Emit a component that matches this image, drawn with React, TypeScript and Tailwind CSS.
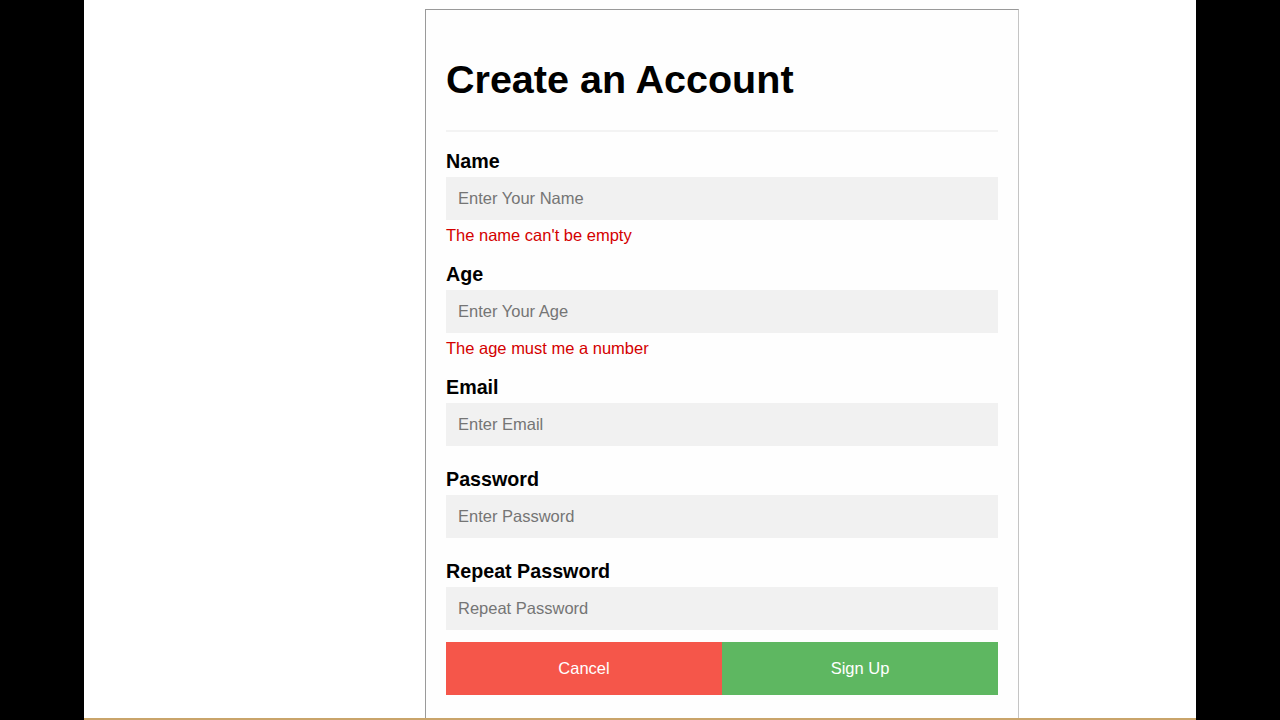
import React from "react";

type Field = {
  label: string;
  placeholder: string;
  type: string;
  error?: string;
};

const fields: Field[] = [
  { label: "Name", placeholder: "Enter Your Name", type: "text", error: "The name can't be empty" },
  { label: "Age", placeholder: "Enter Your Age", type: "text", error: "The age must me a number" },
  { label: "Email", placeholder: "Enter Email", type: "text" },
  { label: "Password", placeholder: "Enter Password", type: "password" },
  { label: "Repeat Password", placeholder: "Repeat Password", type: "password" },
];

function FormField({ label, placeholder, type, error, last }: Field & { last?: boolean }) {
  return (
    <div className={last ? "" : error ? "mb-[17px]" : "mb-[21px]"}>
      <label className="block text-[19.7px] leading-[24px] font-bold text-black mb-[4px]">{label}</label>
      <input
        type={type}
        placeholder={placeholder}
        className="block w-full h-[43px] px-[12px] bg-[#f1f1f1] text-[16.5px] text-black placeholder:text-[#757575] outline-none"
      />
      {error && <p className="mt-[5px] text-[16.5px] leading-[20px] text-[#d40000]">{error}</p>}
    </div>
  );
}

export default function App() {
  return (
    <div className="flex h-[720px] w-[1280px] overflow-hidden bg-black font-['Liberation_Sans',Arial,sans-serif]">
      <div className="w-[84px] shrink-0 bg-black" />

      <div className="flex flex-1 flex-col bg-white">
        <div className="flex-1 pt-[9px] pl-[341px] overflow-hidden">
          {/* Signup card */}
          <div className="w-[594px] h-full border border-b-0 border-[#9a9a9a] border-r-[#c4c4c4] bg-[#fefefe] px-[20px] pt-[45px]">
            <h1 className="text-[39.5px] leading-[48px] font-bold text-black">Create an Account</h1>
            <div className="mt-[27px] mb-[17px] h-[2px] bg-[#f3f3f3]" />

            {fields.map((f, i) => (
              <FormField key={f.label} {...f} last={i === fields.length - 1} />
            ))}

            <div className="mt-[12px] flex h-[53px]">
              <button className="flex-1 bg-[#f5564a] text-[16.5px] text-white">Cancel</button>
              <button className="flex-1 bg-[#5eb761] text-[16.5px] text-white">Sign Up</button>
            </div>
          </div>
        </div>
        {/* Cropped taskbar edge */}
        <div className="h-[2px] bg-[#c9a46a]" />
      </div>

      <div className="w-[84px] shrink-0 bg-black" />
    </div>
  );
}
